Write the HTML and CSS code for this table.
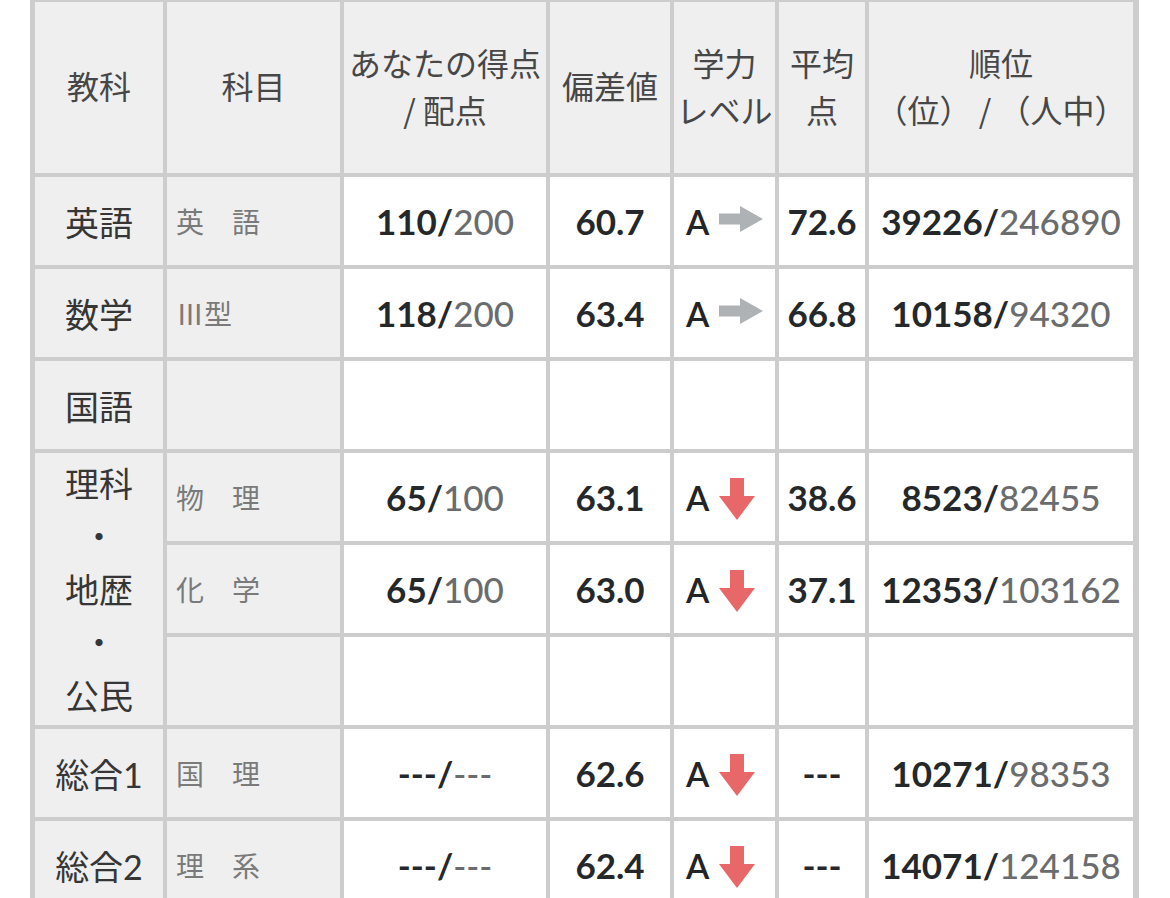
FILE: index.html
```html
<!DOCTYPE html>
<html lang="ja">
<head>
<meta charset="utf-8">
<title>成績表</title>
<link rel="stylesheet" href="styles.css">
</head>
<body>
<div class="grid">
  <div class="cell head">教科</div>
  <div class="cell head">科目</div>
  <div class="cell head">あなたの得点<br>/ 配点</div>
  <div class="cell head">偏差値</div>
  <div class="cell head">学力<br>レベル</div>
  <div class="cell head">平均<br>点</div>
  <div class="cell head">順位<br>（位） / （人中）</div>

  <div class="cell subj">英語</div>
  <div class="cell sub">英　語</div>
  <div class="cell num"><b>110/</b><span class="g">200</span></div>
  <div class="cell num"><b>60.7</b></div>
  <div class="cell lvl"><span class="a">A</span><svg class="ar" width="44" height="26" viewBox="0 0 44 26"><path d="M0 7.5H21V0L44 13L21 26V18.5H0Z" fill="#aeb2b4"/></svg></div>
  <div class="cell num"><b>72.6</b></div>
  <div class="cell num"><b>39226/</b><span class="g">246890</span></div>

  <div class="cell subj">数学</div>
  <div class="cell sub">Ⅲ型</div>
  <div class="cell num"><b>118/</b><span class="g">200</span></div>
  <div class="cell num"><b>63.4</b></div>
  <div class="cell lvl"><span class="a">A</span><svg class="ar" width="44" height="26" viewBox="0 0 44 26"><path d="M0 7.5H21V0L44 13L21 26V18.5H0Z" fill="#aeb2b4"/></svg></div>
  <div class="cell num"><b>66.8</b></div>
  <div class="cell num"><b>10158/</b><span class="g">94320</span></div>

  <div class="cell subj">国語</div>
  <div class="cell sub"></div>
  <div class="cell"></div>
  <div class="cell"></div>
  <div class="cell"></div>
  <div class="cell"></div>
  <div class="cell"></div>

  <div class="cell subj multi">理科<br>・<br>地歴<br>・<br>公民</div>
  <div class="cell sub">物　理</div>
  <div class="cell num"><b>65/</b><span class="g">100</span></div>
  <div class="cell num"><b>63.1</b></div>
  <div class="cell lvl"><span class="a">A</span><svg class="ad" width="36" height="42" viewBox="0 0 36 42"><path d="M11 0H25V18H36L18 42L0 18H11Z" fill="#e8686a"/></svg></div>
  <div class="cell num"><b>38.6</b></div>
  <div class="cell num"><b>8523/</b><span class="g">82455</span></div>

  <div class="cell sub">化　学</div>
  <div class="cell num"><b>65/</b><span class="g">100</span></div>
  <div class="cell num"><b>63.0</b></div>
  <div class="cell lvl"><span class="a">A</span><svg class="ad" width="36" height="42" viewBox="0 0 36 42"><path d="M11 0H25V18H36L18 42L0 18H11Z" fill="#e8686a"/></svg></div>
  <div class="cell num"><b>37.1</b></div>
  <div class="cell num"><b>12353/</b><span class="g">103162</span></div>

  <div class="cell sub"></div>
  <div class="cell"></div>
  <div class="cell"></div>
  <div class="cell"></div>
  <div class="cell"></div>
  <div class="cell"></div>

  <div class="cell subj">総合1</div>
  <div class="cell sub">国　理</div>
  <div class="cell num"><b>---/</b><span class="g">---</span></div>
  <div class="cell num"><b>62.6</b></div>
  <div class="cell lvl"><span class="a">A</span><svg class="ad" width="36" height="42" viewBox="0 0 36 42"><path d="M11 0H25V18H36L18 42L0 18H11Z" fill="#e8686a"/></svg></div>
  <div class="cell num"><b>---</b></div>
  <div class="cell num"><b>10271/</b><span class="g">98353</span></div>

  <div class="cell subj">総合2</div>
  <div class="cell sub">理　系</div>
  <div class="cell num"><b>---/</b><span class="g">---</span></div>
  <div class="cell num"><b>62.4</b></div>
  <div class="cell lvl"><span class="a">A</span><svg class="ad" width="36" height="42" viewBox="0 0 36 42"><path d="M11 0H25V18H36L18 42L0 18H11Z" fill="#e8686a"/></svg></div>
  <div class="cell num"><b>---</b></div>
  <div class="cell num"><b>14071/</b><span class="g">124158</span></div>
</div>
</body>
</html>
```
FILE: styles.css
```css
html, body {
  margin: 0;
  padding: 0;
  background: #ffffff;
  overflow: hidden;
}

body {
  font-family: Lato, "Noto Sans CJK JP", sans-serif;
  color: #2a2c2e;
}

.grid {
  margin-left: 30px;
  width: 1109px;
  box-sizing: border-box;
  display: grid;
  grid-template-columns: 128px 173px 202px 120px 101px 86px 264px;
  grid-template-rows: 171px;
  grid-auto-rows: 88px;
  gap: 4px;
  padding: 2px 6px 0 5px;
  background: #cdcdcd;
}

.cell {
  background: #ffffff;
  display: flex;
  align-items: center;
  justify-content: center;
  min-width: 0;
}

.head {
  background: #efefef;
  font-family: "Noto Sans CJK JP", sans-serif;
  font-size: 32px;
  line-height: 47px;
  color: #474747;
  text-align: center;
  white-space: nowrap;
  padding-bottom: 4px;
  box-sizing: border-box;
}

.subj {
  background: #efefef;
  font-family: Lato, "Noto Sans CJK JP", sans-serif;
  font-size: 34px;
  color: #363636;
  text-align: center;
}

.multi {
  grid-row: span 3;
  line-height: 53px;
}

.sub {
  background: #efefef;
  justify-content: flex-start;
  padding-left: 9px;
  font-family: "Noto Sans CJK JP", sans-serif;
  font-size: 28px;
  color: #7a7a7a;
}

.num {
  font-size: 35px;
  white-space: nowrap;
}

.num b {
  font-weight: 700;
  color: #25282a;
}

.num .g {
  font-weight: 500;
  color: #6a6c6e;
}

.lvl {
  justify-content: flex-start;
  padding-left: 12px;
  gap: 10px;
}

.a {
  font-size: 34px;
  font-weight: 600;
  color: #222426;
}

.ar {
  margin-top: -4px;
  filter: blur(0.6px);
}

.ad {
  margin-top: 4px;
  filter: blur(0.5px);
}
```
